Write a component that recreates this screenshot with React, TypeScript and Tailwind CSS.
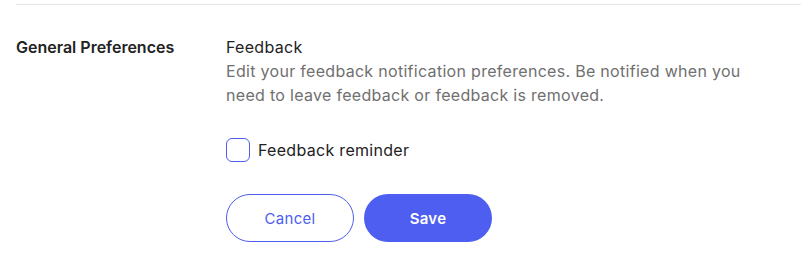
import React, { useState } from 'react';

const App: React.FC = () => {
  const [remind, setRemind] = useState(false);

  return (
    <div className="w-[801px] h-[269px] bg-white pl-4 pt-1" style={{ fontFamily: 'Inter, "Noto Sans", sans-serif' }}>
      <div className="border-t border-[#e6e6e6] flex pt-[30px]">
        <div className="w-[210px] shrink-0">
          <h2 className="text-[16px] leading-6 font-semibold text-[#222]">General Preferences</h2>
        </div>
        <div className="w-[530px] tracking-[0.3px]">
          <h3 className="text-[16px] leading-6 text-[#222]">Feedback</h3>
          <p className="text-[16px] leading-6 text-[#707070]">
            Edit your feedback notification preferences. Be notified when you need to leave feedback or feedback is removed.
          </p>

          <label className="flex items-center gap-2 mt-[31px] cursor-pointer">
            <input
              type="checkbox"
              checked={remind}
              onChange={() => setRemind(!remind)}
              className="appearance-none w-6 h-6 rounded-md border-[1.5px] border-[#4d5ef0] bg-white"
            />
            <span className="text-[16px] leading-6 text-[#222]">Feedback reminder</span>
          </label>

          <div className="flex gap-[10px] mt-[32px]">
            <button className="w-[128px] h-12 rounded-full border border-[#4d5ef0] text-[#4d5ef0] text-[15px] pt-0.5">
              Cancel
            </button>
            <button className="w-[128px] h-12 rounded-full bg-[#4d5ef0] text-white text-[15px] font-semibold pt-0.5">
              Save
            </button>
          </div>
        </div>
      </div>
    </div>
  );
};

export default App;
